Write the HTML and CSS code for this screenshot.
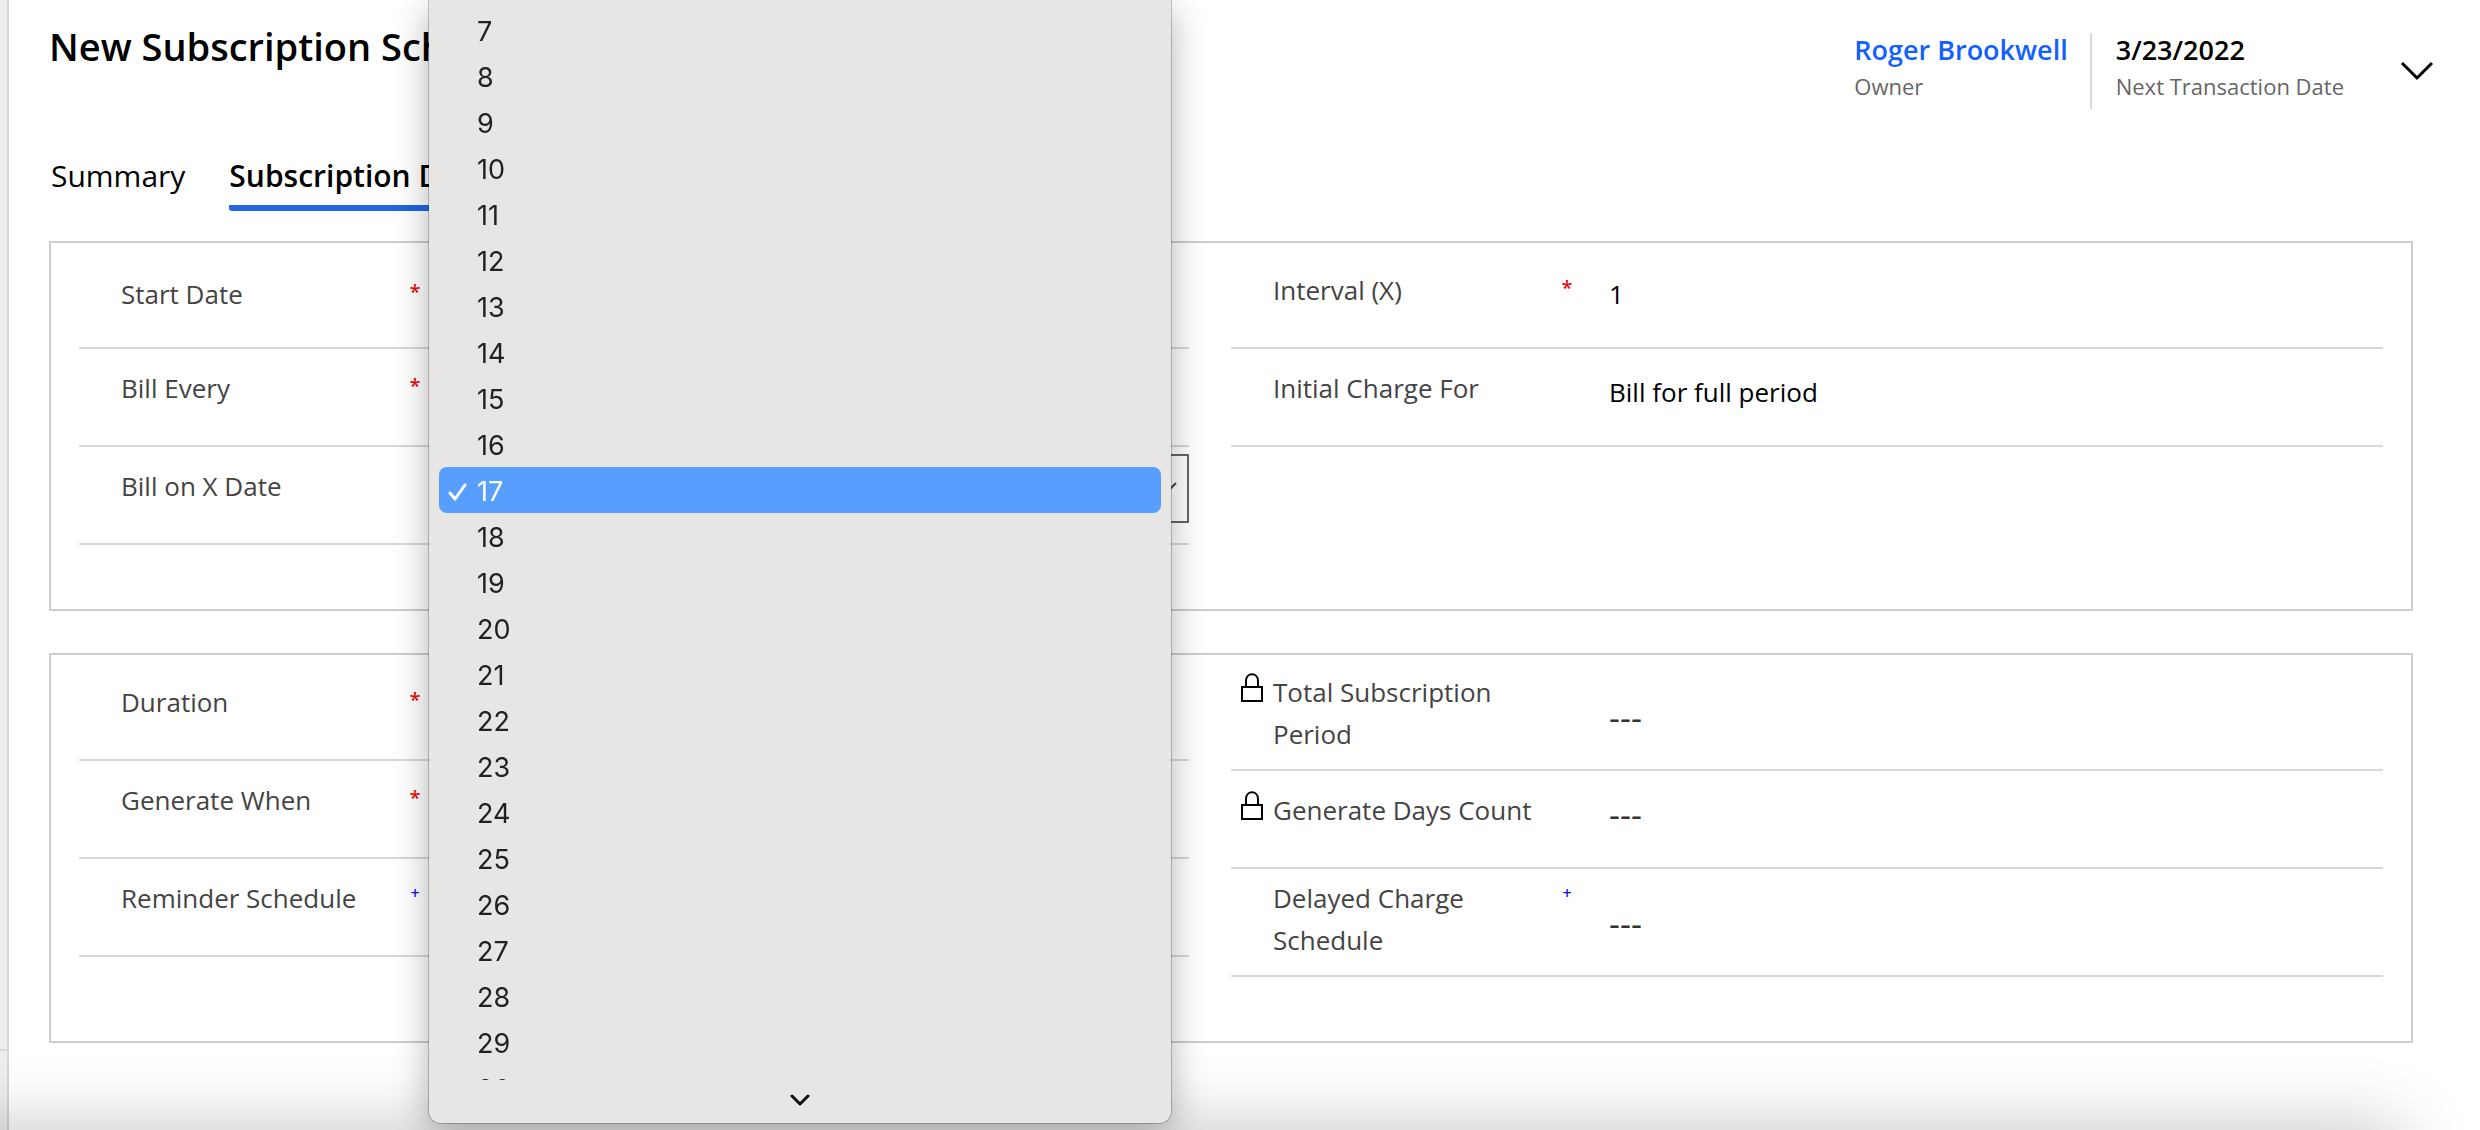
FILE: index.html
```html
<!DOCTYPE html>
<html lang="en">
<head>
<meta charset="utf-8">
<title>New Subscription Schedule</title>
<link rel="stylesheet" href="styles.css">
</head>
<body>
<div class="shell">
  <aside class="rail"></aside>
  <main class="page">
    <header class="header">
      <h1 class="title">New Subscription Schedule</h1>
      <div class="facts">
        <div class="fact">
          <a class="fact-value fact-link" href="#">Roger Brookwell</a>
          <span class="fact-name">Owner</span>
        </div>
        <div class="fact">
          <span class="fact-value">3/23/2022</span>
          <span class="fact-name">Next Transaction Date</span>
        </div>
        <button class="expand" aria-label="Expand header">
          <svg width="34" height="20" viewBox="0 0 34 20" fill="none" stroke="#000" stroke-width="3"><path d="M2 2l15 15L32 2"/></svg>
        </button>
      </div>
    </header>

    <nav class="tabs">
      <a class="tab" href="#">Summary</a>
      <a class="tab tab-active" href="#">Subscription Details</a>
    </nav>

    <section class="panel">
      <div class="column">
        <div class="row row-first row-date">
          <label class="label" for="start"><span class="lock"></span><span class="name">Start Date</span><span class="mark">*</span></label>
          <input class="value" id="start" type="text">
        </div>
        <div class="row">
          <label class="label" for="every"><span class="lock"></span><span class="name">Bill Every</span><span class="mark">*</span></label>
          <input class="value" id="every" type="text">
        </div>
        <div class="row row-open">
          <label class="label" for="xdate"><span class="lock"></span><span class="name">Bill on X Date</span></label>
          <div class="select-box">
            <select class="select" id="xdate"><option>17</option></select>
            <svg class="select-arrow" width="22" height="14" viewBox="0 0 22 14" fill="none" stroke="#444" stroke-width="2"><path d="M2 2l9 9 9-9"/></svg>
          </div>
        </div>
      </div>
      <div class="column">
        <div class="row row-first">
          <label class="label" for="interval"><span class="lock"></span><span class="name">Interval (X)</span><span class="mark">*</span></label>
          <input class="value" id="interval" type="text" value="1">
        </div>
        <div class="row">
          <label class="label" for="initial"><span class="lock"></span><span class="name">Initial Charge For</span></label>
          <select class="value" id="initial"><option>Bill for full period</option></select>
        </div>
      </div>
    </section>

    <section class="panel">
      <div class="column">
        <div class="row row-first">
          <label class="label" for="duration"><span class="lock"></span><span class="name">Duration</span><span class="mark">*</span></label>
          <input class="value" id="duration" type="text">
        </div>
        <div class="row">
          <label class="label" for="when"><span class="lock"></span><span class="name">Generate When</span><span class="mark">*</span></label>
          <input class="value" id="when" type="text">
        </div>
        <div class="row">
          <label class="label" for="reminder"><span class="lock"></span><span class="name">Reminder Schedule</span><span class="mark mark-plus">+</span></label>
          <input class="value" id="reminder" type="text">
        </div>
      </div>
      <div class="column">
        <div class="row row-first row-tall">
          <label class="label" for="total"><span class="lock"><svg width="22" height="29" viewBox="0 0 22 29" fill="none" stroke="#000" stroke-width="2"><path d="M1 14h20v14H1zM5 14V8c0-9 12-9 12 0v6"/></svg></span><span class="name">Total Subscription Period</span></label>
          <input class="value value-empty" id="total" type="text" value="---" readonly>
        </div>
        <div class="row">
          <label class="label" for="days"><span class="lock"><svg width="22" height="29" viewBox="0 0 22 29" fill="none" stroke="#000" stroke-width="2"><path d="M1 14h20v14H1zM5 14V8c0-9 12-9 12 0v6"/></svg></span><span class="name">Generate Days Count</span></label>
          <input class="value value-empty" id="days" type="text" value="---" readonly>
        </div>
        <div class="row row-tall">
          <label class="label" for="delayed"><span class="lock"></span><span class="name">Delayed Charge Schedule</span><span class="mark mark-plus">+</span></label>
          <input class="value value-empty" id="delayed" type="text" value="---">
        </div>
      </div>
    </section>
  </main>
</div>

<div class="menu">
  <ul class="options" role="listbox" aria-label="Bill on X Date">
    <li class="option" role="option">7</li>
    <li class="option" role="option">8</li>
    <li class="option" role="option">9</li>
    <li class="option" role="option">10</li>
    <li class="option" role="option">11</li>
    <li class="option" role="option">12</li>
    <li class="option" role="option">13</li>
    <li class="option" role="option">14</li>
    <li class="option" role="option">15</li>
    <li class="option" role="option">16</li>
    <li class="option option-selected" role="option" aria-selected="true"><svg class="check" width="20" height="20" viewBox="0 0 20 20" fill="none" stroke="#fff" stroke-width="3" stroke-linecap="round" stroke-linejoin="round"><path d="M2 11l5 6L17 3"/></svg>17</li>
    <li class="option" role="option">18</li>
    <li class="option" role="option">19</li>
    <li class="option" role="option">20</li>
    <li class="option" role="option">21</li>
    <li class="option" role="option">22</li>
    <li class="option" role="option">23</li>
    <li class="option" role="option">24</li>
    <li class="option" role="option">25</li>
    <li class="option" role="option">26</li>
    <li class="option" role="option">27</li>
    <li class="option" role="option">28</li>
    <li class="option" role="option">29</li>
    <li class="option" role="option">30</li>
  </ul>
  <button class="more" aria-label="Scroll down">
    <svg width="20" height="12" viewBox="0 0 20 12" fill="none" stroke="#111" stroke-width="3" stroke-linecap="round" stroke-linejoin="round"><path d="M2 2l8 8 8-8"/></svg>
  </button>
</div>
<div class="shade"></div>
</body>
</html>
```

FILE: styles.css
```css
* {
  box-sizing: border-box;
}

body {
  position: relative;
  margin: 0;
  background: #fff;
  color: #000;
  font-family: "Segoe UI", "Open Sans", "Noto Sans", sans-serif;
  font-size: 26px;
  line-height: 42px;
}

a {
  color: inherit;
  text-decoration: none;
}

button {
  padding: 0;
  border: 0;
  background: none;
}

svg {
  display: block;
}

.shell {
  display: flex;
  min-height: 100vh;
}

.rail {
  flex: none;
  width: 9px;
  border-right: 2px solid #d6d6d6;
  background: linear-gradient(#d6d6d6, #d6d6d6) 0 1049px / 100% 2px no-repeat #eee;
}

.page {
  flex: 1;
  min-width: 0;
  padding: 20px 67px 0 40px;
}

.header {
  display: flex;
  justify-content: space-between;
  height: 132px;
}

.title {
  margin: 0;
  font-size: 38px;
  font-weight: 600;
  line-height: 52px;
}

.facts {
  display: flex;
  align-items: flex-start;
  padding-top: 13px;
  margin-right: -21px;
}

.fact {
  display: flex;
  flex-direction: column;
  height: 76px;
  padding: 0 22px 0 0;
}

.fact + .fact {
  padding: 0 56px 0 24px;
  border-left: 2px solid #d8d8d8;
}

.fact-value {
  font-size: 27px;
  font-weight: 600;
  line-height: 34px;
}

.fact-link {
  color: #1160ff;
}

.fact-name {
  color: #666;
  font-size: 22px;
  line-height: 38px;
}

.expand {
  padding-top: 28px;
}

.tabs {
  display: flex;
  gap: 44px;
  height: 89px;
  padding-left: 2px;
  font-size: 30px;
}

.tab {
  height: 59px;
  padding-top: 3px;
}

.tab-active {
  border-bottom: 6px solid #2266e3;
  border-radius: 3px;
  font-weight: 600;
}

.panel {
  display: grid;
  grid-template-columns: minmax(0, 1110fr) minmax(0, 1152fr);
  gap: 42px;
  padding: 0 28px 64px;
  margin-bottom: 42px;
  border: 2px solid #cfcccc;
}

.panel + .panel {
  margin-bottom: 0;
}

.row {
  display: flex;
  align-items: center;
  padding: 14px 0 32px;
  border-bottom: 2px solid #d8d8d8;
}

.row-first {
  padding-top: 22px;
}

.row-date {
  align-items: flex-end;
}

.row-tall {
  padding-top: 8px;
  padding-bottom: 14px;
}

.row-first.row-tall {
  padding-top: 16px;
}

.row-open {
  align-items: flex-start;
  padding: 7px 0 20px;
}

.row-open .label {
  padding-top: 11px;
}

.label {
  display: flex;
  flex: none;
  width: 378px;
  padding-right: 36px;
  color: #444;
}

.lock {
  flex: none;
  width: 42px;
  padding: 2px 0 0 10px;
}

.name {
  flex: 1;
}

.mark {
  flex: none;
  width: 12px;
  color: #e81010;
  font-size: 20px;
  font-weight: 600;
  line-height: 38px;
  text-align: center;
}

.mark-plus {
  color: #1010f0;
  font-size: 16px;
  line-height: 32px;
}

.value {
  flex: 1;
  min-width: 0;
  height: 42px;
  padding: 0;
  margin: 8px 0 0;
  border: 0;
  appearance: none;
  background: none;
  color: #000;
  font: inherit;
}

.value-empty {
  color: #333;
  font-size: 34px;
}

.select-box {
  position: relative;
  flex: 1;
}

.select {
  display: block;
  width: 100%;
  height: 69px;
  padding: 0 18px;
  border: 2px solid #666;
  border-radius: 0;
  appearance: none;
  background: #fff;
  font: inherit;
}

.select-arrow {
  position: absolute;
  top: 27px;
  right: 11px;
}

.menu {
  position: absolute;
  z-index: 2;
  top: 0;
  left: 429px;
  width: 742px;
  border-radius: 0 0 12px 12px;
  padding: 7px 10px 0;
  background: #e8e6e4;
  box-shadow: 0 0 0 1px #00000038, 0 10px 36px #0000004d;
  color: #222;
  font-family: "SF Pro Text", Inter, sans-serif;
  font-size: 27px;
}

.options {
  height: 1073px;
  padding: 0;
  margin: 0;
  overflow: hidden;
  list-style: none;
}

.option {
  position: relative;
  padding: 4px 0 0 38px;
  border-radius: 8px;
}

.option-selected {
  background: #579eff;
  color: #fff;
}

.check {
  position: absolute;
  top: 15px;
  left: 9px;
}

.more {
  display: flex;
  justify-content: center;
  width: 100%;
  height: 43px;
  padding-top: 14px;
}

/* Soft shadow rising from the lower edge of the window */
.shade {
  position: fixed;
  right: 80px;
  bottom: -60px;
  left: -100px;
  height: 60px;
  box-shadow: 0 0 70px #00000040;
  pointer-events: none;
}
```
